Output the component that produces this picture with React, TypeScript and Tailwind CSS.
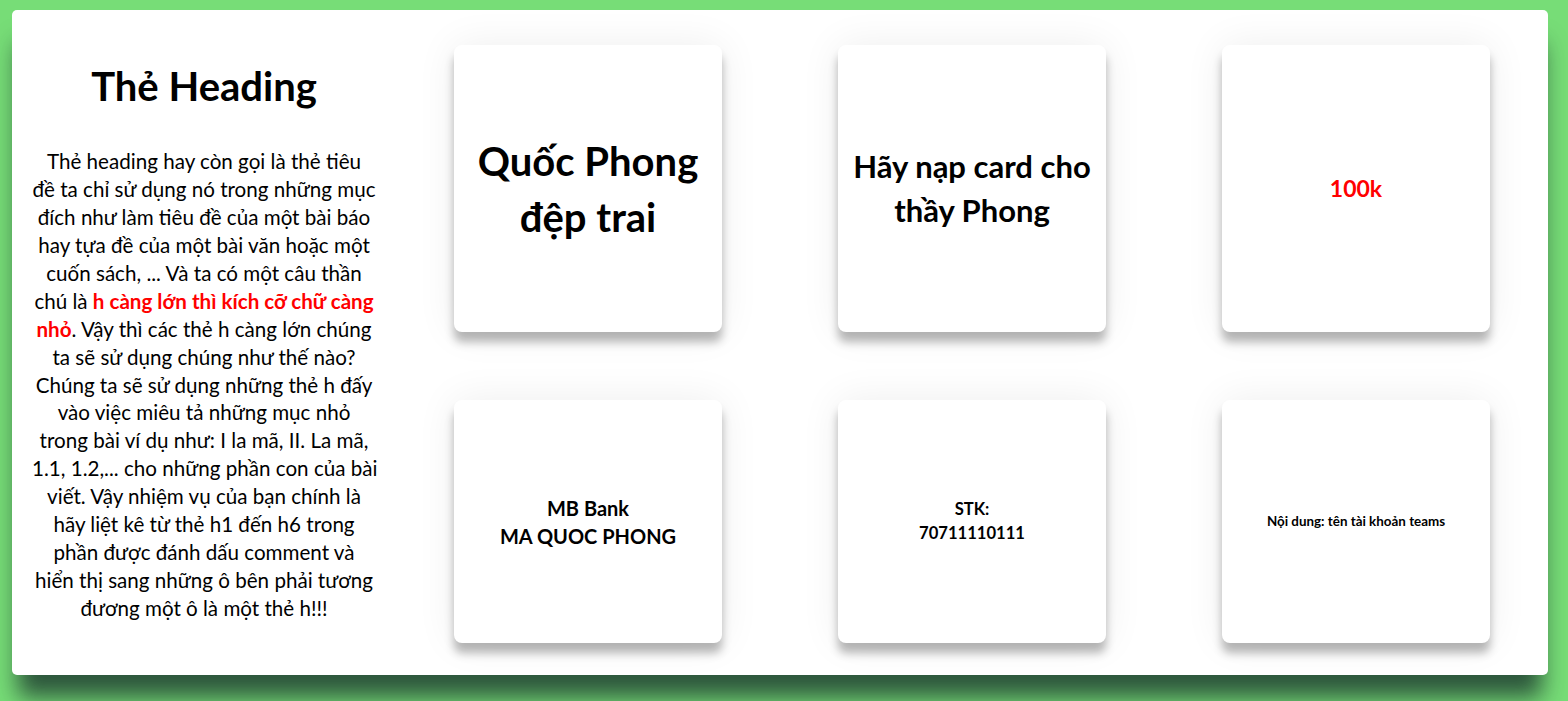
import React from "react";

const cardCls =
  "bg-white rounded-[8px] flex items-center justify-center text-center font-bold text-black leading-[1.4] shadow-[0_10px_10px_rgba(0,0,0,0.28),0_0_40px_rgba(0,0,0,0.07)]";

export default function App() {
  return (
    <div
      className="w-[1568px] h-[701px] bg-[#77dd77] overflow-hidden pt-[10px] pl-[12px]"
      style={{ fontFamily: "Lato, 'Noto Sans', sans-serif" }}
    >
      <div className="w-[1536px] h-[665px] bg-white rounded-[5px] flex shadow-[0_28px_22px_-6px_rgba(20,40,40,0.75)]">
        <div className="ml-[20px] w-[344px] flex flex-col justify-center text-center text-black">
          <h1 className="text-[40px] font-bold leading-[1.2]">Thẻ Heading</h1>
          <p className="mt-[38px] text-[20.6px] leading-[27.9px] whitespace-nowrap">
            Thẻ heading hay còn gọi là thẻ tiêu<br />
            đề ta chỉ sử dụng nó trong những mục<br />
            đích như làm tiêu đề của một bài báo<br />
            hay tựa đề của một bài văn hoặc một<br />
            cuốn sách, ... Và ta có một câu thần<br />
            chú là <b className="text-[#ff0000]">h càng lớn thì kích cỡ chữ càng<br />nhỏ</b>. Vậy thì các thẻ h càng lớn chúng<br />
            ta sẽ sử dụng chúng như thế nào?<br />
            Chúng ta sẽ sử dụng những thẻ h đấy<br />
            vào việc miêu tả những mục nhỏ<br />
            trong bài ví dụ như: I la mã, II. La mã,<br />
            1.1, 1.2,... cho những phần con của bài<br />
            viết. Vậy nhiệm vụ của bạn chính là<br />
            hãy liệt kê từ thẻ h1 đến h6 trong<br />
            phần được đánh dấu comment và<br />
            hiển thị sang những ô bên phải tương<br />
            đương một ô là một thẻ h!!!
          </p>
        </div>
        <div className="ml-[78px] mt-[35px] grid grid-cols-[268px_268px_268px] grid-rows-[287px_243px] gap-x-[116px] gap-y-[68px] h-fit">
          <div className={cardCls}>
            <h1 className="text-[40px] px-4">Quốc Phong<br />đệp trai</h1>
          </div>
          <div className={cardCls}>
            <h2 className="text-[31px] px-2 whitespace-nowrap">Hãy nạp card cho<br />thầy Phong</h2>
          </div>
          <div className={cardCls}>
            <h3 className="text-[23px] text-[#ff0000]">100k</h3>
          </div>
          <div className={cardCls}>
            <h4 className="text-[20px]">MB Bank<br />MA QUOC PHONG</h4>
          </div>
          <div className={cardCls}>
            <h5 className="text-[16.6px]">STK:<br />70711110111</h5>
          </div>
          <div className={cardCls}>
            <h6 className="text-[13.4px]">Nội dung: tên tài khoản teams</h6>
          </div>
        </div>
      </div>
    </div>
  );
}
